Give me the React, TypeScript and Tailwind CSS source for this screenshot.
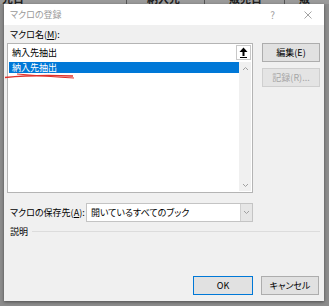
const font = "font-['Noto_Sans_CJK_JP','Noto_Sans',sans-serif] [font-feature-settings:'palt']";

function Chevron({ up = false }: { up?: boolean }) {
  return (
    <svg width="7" height="5" viewBox="0 0 7 5" fill="none" stroke="#a0a0a0" strokeWidth="1">
      {up ? <polyline points="1 4 3.5 1.5 6 4" /> : <polyline points="1 1 3.5 3.5 6 1" />}
    </svg>
  );
}

function Button({
  children,
  disabled = false,
  primary = false,
}: {
  children: React.ReactNode;
  disabled?: boolean;
  primary?: boolean;
}) {
  return (
    <div
      className={
        "flex items-center justify-center h-[19px] text-[9px] border " +
        (primary
          ? "border-[#0078d7] bg-[#e1e1e1] text-black"
          : disabled
          ? "border-[#cfcfcf] bg-[#e4e4e4] text-[#a6a6a6]"
          : "border-[#adadad] bg-[#e1e1e1] text-black")
      }
    >
      {children}
    </div>
  );
}

export default function App() {
  return (
    <div className={`w-[329px] h-[306px] overflow-hidden bg-[#8c8c8c] ${font}`}>
      {/* spreadsheet behind the dialog */}
      <div className="h-[4px] overflow-hidden flex bg-[#9a9a9a] text-[11px] font-bold text-[#202020] leading-none">
        <div className="w-[127px] -mt-[7px] pl-[2px] border-r border-[#555]">先日</div>
        <div className="w-[78px] -mt-[7px] pl-[20px] border-r border-[#555]">納入先</div>
        <div className="w-[80px] -mt-[7px] pl-[24px] border-r border-[#555]">販売日</div>
        <div className="flex-1 -mt-[7px] pl-[14px]">販</div>
      </div>

      <div className="relative ml-[4px] w-[320px] h-[297px] flex flex-col shadow-[0_1px_3px_rgba(0,0,0,0.45)]">
        {/* title bar */}
        <div className="h-[21px] bg-white flex items-center pl-[6px] text-[9px] text-[#9a9a9a]">
          <span>マクロの登録</span>
          <span className="ml-auto mr-[29px] text-[10px] text-[#a0a0a0]">?</span>
          <svg width="8" height="8" viewBox="0 0 8 8" stroke="#9a9a9a" strokeWidth="0.9" className="mr-[12px]">
            <line x1="0.5" y1="0.5" x2="7.5" y2="7.5" />
            <line x1="7.5" y1="0.5" x2="0.5" y2="7.5" />
          </svg>
        </div>

        {/* body */}
        <div className="flex-1 bg-[#f0f0f0] flex flex-col">
          <div className="flex">
            <div className="ml-[3px] w-[246px] flex flex-col">
              <div className="h-[18px] flex items-center pl-[3px] pt-[1px] text-[9px] text-black">
                マクロ名(<span className="underline">M</span>):
              </div>
              <div className="h-[150px] border border-[#b4b4b4] bg-white flex flex-col">
                <div className="h-[17px] flex items-center pl-[4px] pr-[1px] text-[9px] text-black">
                  <span className="flex-1">納入先抽出</span>
                  <div className="w-[15px] h-[15px] border border-[#c8c8c8] flex items-center justify-center">
                    <svg width="9" height="11" viewBox="0 0 9 11">
                      <polygon points="4.5 0.5 8.5 5 0.5 5" fill="#000" />
                      <rect x="3.5" y="4.5" width="2" height="4.5" fill="#000" />
                      <rect x="1" y="10" width="7" height="1" fill="#000" />
                    </svg>
                  </div>
                </div>
                <div className="flex-1 flex">
                  <div className="flex-1 pl-[1px] pt-[1px]">
                    <div className="h-[11px] bg-[#0078d7] text-white text-[9px] leading-[11px] pl-[3px]">
                      納入先抽出
                    </div>
                  </div>
                  <div className="w-[12px] bg-[#f0f0f0] flex flex-col items-center justify-between pt-[4px] pb-[3px] mt-[1px] mr-[1px] mb-[1px]">
                    <Chevron up />
                    <Chevron />
                  </div>
                </div>
              </div>
            </div>

            <div className="ml-[9px] w-[58px] flex flex-col gap-[6px] pt-[18px]">
              <Button>編集(E)</Button>
              <Button disabled>記録(R)...</Button>
            </div>
          </div>

          {/* save location */}
          <div className="mt-[10px] flex items-center h-[19px] pl-[6px] text-[9px] text-black">
            <span className="w-[76px]">
              マクロの保存先(<span className="underline">A</span>):
            </span>
            <div className="w-[167px] h-[19px] border border-[#c4c4c4] bg-white flex items-center">
              <span className="flex-1 pl-[4px]">開いているすべてのブック</span>
              <div className="w-[12px] h-full bg-[#e6e6e6] border-l border-[#d0d0d0] flex items-center justify-center">
                <Chevron />
              </div>
            </div>
          </div>

          <div className="mt-[3px] flex items-center pl-[6px] pr-[4px] text-[9px] text-black">
            <span>説明</span>
            <div className="flex-1 ml-[4px] h-px bg-[#dcdcdc]" />
          </div>

          <div className="mt-auto mb-[6px] flex justify-end gap-[8px] pr-[5px]">
            <div className="w-[60px]">
              <Button primary>OK</Button>
            </div>
            <div className="w-[58px]">
              <Button>キャンセル</Button>
            </div>
          </div>
        </div>

        {/* red hand-drawn underline */}
        <svg className="absolute left-0 top-0 pointer-events-none" width="320" height="297">
          <path d="M1 73.5 Q 30 70.5 69 72" stroke="#e0302a" strokeWidth="1.4" fill="none" />
          <path d="M13 70 Q 45 72.5 70 74" stroke="#e0302a" strokeWidth="1.2" fill="none" />
        </svg>
      </div>
    </div>
  );
}
